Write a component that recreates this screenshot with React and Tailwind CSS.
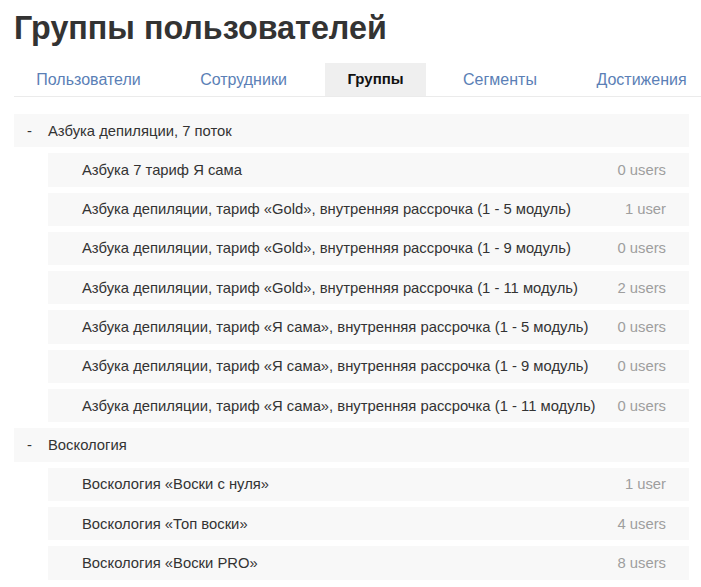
import React from 'react';

const tabs = [
  { label: 'Пользователи', w: 'w-[149px]', ml: 'ml-0' },
  { label: 'Сотрудники', w: 'w-[131px]', ml: 'ml-[15px]' },
  { label: 'Группы', w: 'w-[101px]', ml: 'ml-[16px]', active: true },
  { label: 'Сегменты', w: 'w-[114px]', ml: 'ml-[17px]' },
  { label: 'Достижения', w: 'w-[131px]', ml: 'ml-[19px]' },
];

const groups = [
  {
    name: 'Азбука депиляции, 7 поток',
    items: [
      ['Азбука 7 тариф Я сама', '0 users'],
      ['Азбука депиляции, тариф «Gold», внутренняя рассрочка (1 - 5 модуль)', '1 user'],
      ['Азбука депиляции, тариф «Gold», внутренняя рассрочка (1 - 9 модуль)', '0 users'],
      ['Азбука депиляции, тариф «Gold», внутренняя рассрочка (1 - 11 модуль)', '2 users'],
      ['Азбука депиляции, тариф «Я сама», внутренняя рассрочка (1 - 5 модуль)', '0 users'],
      ['Азбука депиляции, тариф «Я сама», внутренняя рассрочка (1 - 9 модуль)', '0 users'],
      ['Азбука депиляции, тариф «Я сама», внутренняя рассрочка (1 - 11 модуль)', '0 users'],
    ],
  },
  {
    name: 'Воскология',
    items: [
      ['Воскология «Воски с нуля»', '1 user'],
      ['Воскология «Топ воски»', '4 users'],
      ['Воскология «Воски PRO»', '8 users'],
    ],
  },
];

export default function App() {
  return (
    <div className="w-[701px] h-[587px] overflow-hidden bg-white pl-[14px] pr-[12px] font-['Liberation_Sans',Arial,sans-serif] text-[#333]">
      <h1 className="pt-[10px] text-[32.3px] leading-[36px] font-bold text-[#333]">
        Группы пользователей
      </h1>

      <nav className="mt-[17px] -mr-[12px] flex border-b border-[#ebebeb]">
        {tabs.map((t) => (
          <div
            key={t.label}
            className={`${t.w} ${t.ml} shrink-0 h-[33px] flex items-center justify-center ${
              t.active ? 'bg-[#efefef] font-bold text-[15px] text-[#111]' : 'text-[16px] text-[#5b7fb6]'
            }`}
          >
            {t.label}
          </div>
        ))}
      </nav>

      <div className="mt-[17px] flex flex-col gap-[6px]">
        {groups.map((g) => (
          <React.Fragment key={g.name}>
            <div className="h-[33.3px] flex items-center bg-[#f8f8f8] text-[14.8px]">
              <span className="w-[34px] pl-[13px]">-</span>
              <span>{g.name}</span>
            </div>
            {g.items.map(([name, count]) => (
              <div
                key={name}
                className="ml-[34px] h-[33.3px] flex items-center justify-between bg-[#f8f8f8] pl-[34px] pr-[23px] text-[14.8px]"
              >
                <span>{name}</span>
                <span className="text-[#9e9e9e]">{count}</span>
              </div>
            ))}
          </React.Fragment>
        ))}
      </div>
    </div>
  );
}
